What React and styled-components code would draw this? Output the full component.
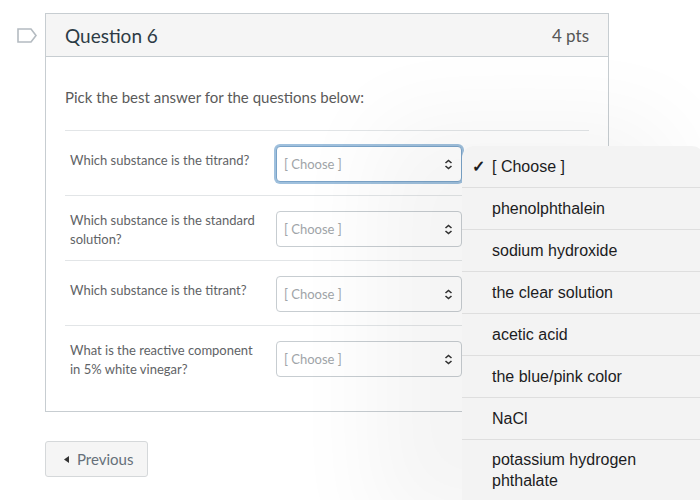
import React from "react";
import styled, { createGlobalStyle } from "styled-components";

const GlobalStyle = createGlobalStyle`
  html, body {
    margin: 0;
    padding: 0;
    background: #fff;
    overflow: hidden;
  }
  body {
    font-family: Lato, "Liberation Sans", sans-serif;
  }
`;

const questions = [
  "Which substance is the titrand?",
  "Which substance is the standard solution?",
  "Which substance is the titrant?",
  "What is the reactive component in 5% white vinegar?",
];

const options = [
  "[ Choose ]",
  "phenolphthalein",
  "sodium hydroxide",
  "the clear solution",
  "acetic acid",
  "the blue/pink color",
  "NaCl",
  "potassium hydrogen phthalate",
];

const Page = styled.div`
  position: relative;
  width: 700px;
  height: 500px;
  padding: 13px 0 0 17px;
  box-sizing: border-box;
`;

const QuestionRow = styled.div`
  display: flex;
  align-items: flex-start;
  gap: 8px;
`;

const Bookmark = styled.div`
  width: 20px;
  padding-top: 14px;
  flex-shrink: 0;
`;

const Card = styled.section`
  width: 564px;
  border: 1px solid #c7cdd1;
  box-sizing: border-box;
  background: #fff;
`;

const Header = styled.header`
  display: flex;
  justify-content: space-between;
  align-items: center;
  height: 42px;
  padding: 0 19px;
  background: #f5f5f5;
  border-bottom: 1px solid #c7cdd1;
  color: #2d3b45;
`;

const Title = styled.h2`
  margin: 0;
  font-size: 19px;
  font-weight: 400;
`;

const Points = styled.span`
  font-size: 17px;
  color: #555;
`;

const Body = styled.div`
  padding: 30px 19px 20px;
`;

const Prompt = styled.p`
  margin: 0 0 23px;
  font-size: 15px;
  color: #5a5a5a;
  line-height: 20px;
`;

const Row = styled.div`
  display: flex;
  align-items: flex-start;
  height: 65px;
  border-top: 1px solid #e2e5e7;
  padding: 15px 0 0 5px;
  box-sizing: border-box;
  &:last-child {
    height: 66px;
  }
`;

const Label = styled.div`
  width: 190px;
  margin-right: 16px;
  font-size: 13px;
  line-height: 19px;
  color: #5f6366;
  padding-top: ${(p) => (p.$single ? "5px" : "0")};
`;

const Select = styled.div`
  display: flex;
  align-items: center;
  justify-content: space-between;
  width: 186px;
  height: 36px;
  box-sizing: border-box;
  padding: 0 8px 0 7px;
  border: 1px solid ${(p) => (p.$focused ? "#7aa3c8" : "#c7cdd1")};
  border-radius: 4px;
  box-shadow: ${(p) => (p.$focused ? "0 0 0 2px #9fc0dd" : "none")};
  background: #fff;
  font-size: 13px;
  color: #a0a4a8;
`;

const Footer = styled.div`
  padding: 29px 0 0 28px;
`;

const PrevButton = styled.button`
  display: flex;
  align-items: center;
  gap: 8px;
  height: 36px;
  padding: 0 14px 0 18px;
  background: #f5f5f5;
  border: 1px solid #d5d8da;
  border-radius: 3px;
  font-family: Lato, "Liberation Sans", sans-serif;
  font-size: 15px;
  color: #66707a;
`;

const Popover = styled.ul`
  position: absolute;
  left: 462px;
  top: 146px;
  width: 242px;
  margin: 0;
  padding: 0;
  list-style: none;
  background: #f3f3f3;
  border-radius: 12px 12px 0 0;
  box-shadow: -60px 0 90px 30px rgba(0, 0, 0, 0.045);
  font-family: "Liberation Sans", Arial, sans-serif;
`;

const Option = styled.li`
  display: flex;
  align-items: center;
  min-height: 42px;
  padding: 9px 20px 9px 30px;
  box-sizing: border-box;
  border-bottom: 1px solid #dedede;
  position: relative;
  font-size: 16px;
  line-height: 21px;
  color: #1c1c1e;
`;

const Check = styled.span`
  position: absolute;
  left: 10px;
  font-size: 16px;
  font-weight: 700;
`;

const BookmarkIcon = () => (
  <svg width="20" height="15" viewBox="0 0 20 15">
    <path d="M1 1 H14 L19 7.5 L14 14 H1 Z" fill="none" stroke="#b4bbc1" strokeWidth="1.6" />
  </svg>
);

const UpDown = () => (
  <svg width="9" height="11" viewBox="0 0 9 11">
    <path d="M1.5 4 L4.5 1.5 L7.5 4 M1.5 7 L4.5 9.5 L7.5 7" fill="none" stroke="#333" strokeWidth="1.6" />
  </svg>
);

const App = () => (
  <Page>
    <GlobalStyle />
    <QuestionRow>
      <Bookmark>
        <BookmarkIcon />
      </Bookmark>
      <Card>
        <Header>
          <Title>Question 6</Title>
          <Points>4 pts</Points>
        </Header>
        <Body>
          <Prompt>Pick the best answer for the questions below:</Prompt>
          {questions.map((q, i) => (
            <Row key={q}>
              <Label $single={q.length < 32}>{q}</Label>
              <Select $focused={i === 0}>
                [ Choose ]
                <UpDown />
              </Select>
            </Row>
          ))}
        </Body>
      </Card>
    </QuestionRow>
    <Footer>
      <PrevButton>
        <svg width="5" height="7" viewBox="0 0 5 7">
          <path d="M5 0 L0 3.5 L5 7 Z" fill="#333" />
        </svg>
        Previous
      </PrevButton>
    </Footer>
    <Popover>
      {options.map((o, i) => (
        <Option key={o}>
          {i === 0 && <Check>✓</Check>}
          {o}
        </Option>
      ))}
    </Popover>
  </Page>
);

export default App;
